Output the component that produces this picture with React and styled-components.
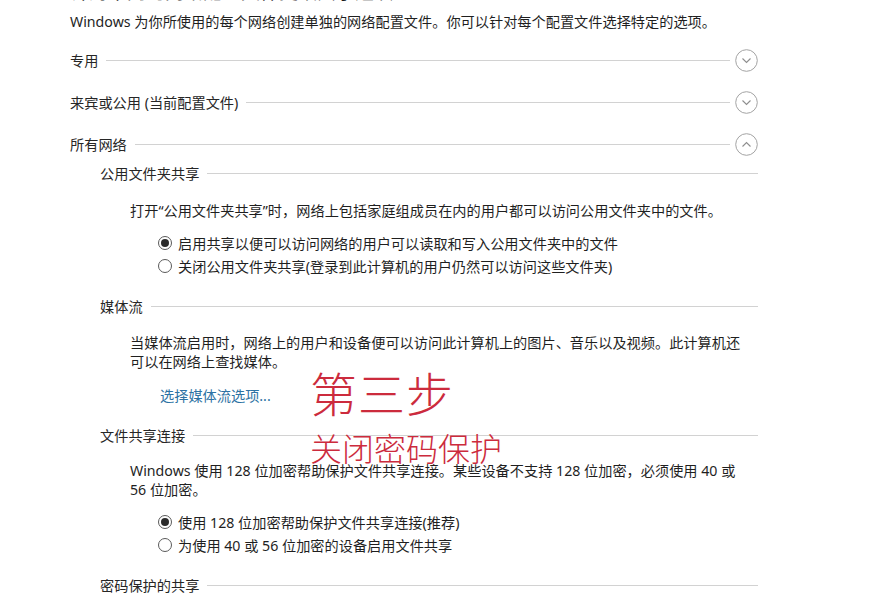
import React from 'react';
import styled, { createGlobalStyle } from 'styled-components';

const GlobalStyle = createGlobalStyle`
    html, body {
        margin: 0;
        padding: 0;
        background: #ffffff;
        overflow: hidden;
    }
    body {
        font-family: "Noto Sans", "Noto Sans CJK SC", sans-serif;
        color: #1f1f1f;
    }
`;

const Page = styled.div`
    position: relative;
    display: flex;
    flex-direction: column;
    width: 688px;
    height: 605px;
    padding-left: 70px;
    font-size: 14.2px;
`;

const Title = styled.div`
    margin-top: -20px;
    font-size: 19px;
    line-height: 24px;
    color: #1a1a1a;
    white-space: nowrap;
`;

const Intro = styled.p`
    margin: 8px 0 0;
    line-height: 20px;
    white-space: nowrap;
`;

const HeaderRow = styled.div`
    display: flex;
    align-items: center;
    height: 24px;
    margin-top: ${(p) => (p.$first ? '16px' : '18px')};
`;

const Label = styled.span`
    white-space: nowrap;
    color: #262626;
`;

const Rule = styled.div`
    flex: 1;
    height: 1px;
    background: #d2d2d2;
    margin: 0 ${(p) => (p.$end ? '0' : '5px')} 0 8px;
`;

const Toggle = styled.svg`
    width: 23px;
    height: 23px;
    flex: none;
`;

const Group = styled.div`
    padding-left: 30px;
    display: flex;
    flex-direction: column;
`;

const SubHeader = styled.div`
    display: flex;
    align-items: center;
    height: 24px;
    margin-top: ${(p) => p.$top}px;
`;

const Body = styled.div`
    padding-left: 30px;
    display: flex;
    flex-direction: column;
`;

const Para = styled.p`
    margin: ${(p) => p.$top || 15}px 0 0;
    line-height: 19px;
    white-space: nowrap;
`;

const Radios = styled.div`
    margin-top: 11px;
    padding-left: 28px;
    display: flex;
    flex-direction: column;
`;

const RadioRow = styled.label`
    display: flex;
    align-items: center;
    height: 23px;
    gap: 6px;
    white-space: nowrap;
`;

const Dot = styled.span`
    width: 12px;
    height: 12px;
    border: 1px solid #5a5a5a;
    border-radius: 50%;
    display: flex;
    align-items: center;
    justify-content: center;
    flex: none;

    &::after {
        content: "";
        width: 8px;
        height: 8px;
        border-radius: 50%;
        background: ${(p) => (p.$on ? '#2b2b2b' : 'transparent')};
    }
`;

const Link = styled.a`
    margin-top: 15px;
    padding-left: 30px;
    line-height: 19px;
    color: #2d72a3;
    text-decoration: none;
`;

const Note = styled.div`
    position: absolute;
    left: 310px;
    top: ${(p) => p.$top}px;
    font-family: "Noto Sans CJK SC", sans-serif;
    font-size: ${(p) => p.$size}px;
    line-height: 1;
    color: #cc2b3d;
    font-weight: 300;
    white-space: nowrap;
    letter-spacing: ${(p) => p.$spacing || 0}px;
`;

const Chevron = ({ up }) => (
    <Toggle viewBox="0 0 23 23">
        <circle cx="11.5" cy="11.5" r="10.8" fill="none" stroke="#a3a3a3" strokeWidth="1" />
        <path
            d={up ? 'M7.5 13.5 L11.5 9.5 L15.5 13.5' : 'M7.5 9.5 L11.5 13.5 L15.5 9.5'}
            fill="none"
            stroke="#8e8e8e"
            strokeWidth="1.1"
        />
    </Toggle>
);

const Radio = ({ on, children }) => (
    <RadioRow>
        <Dot $on={on} />
        <span>{children}</span>
    </RadioRow>
);

const App = () => (
    <>
        <GlobalStyle />
        <Page>
            <Title>针对不同的网络配置文件更改共享选项</Title>
            <Intro>Windows 为你所使用的每个网络创建单独的网络配置文件。你可以针对每个配置文件选择特定的选项。</Intro>

            <HeaderRow $first>
                <Label>专用</Label>
                <Rule />
                <Chevron />
            </HeaderRow>
            <HeaderRow>
                <Label>来宾或公用 (当前配置文件)</Label>
                <Rule />
                <Chevron />
            </HeaderRow>
            <HeaderRow>
                <Label>所有网络</Label>
                <Rule />
                <Chevron up />
            </HeaderRow>

            <Group>
                <SubHeader $top={5}>
                    <Label>公用文件夹共享</Label>
                    <Rule $end />
                </SubHeader>
                <Body>
                    <Para $top={16}>打开“公用文件夹共享”时，网络上包括家庭组成员在内的用户都可以访问公用文件夹中的文件。</Para>
                    <Radios>
                        <Radio on>启用共享以便可以访问网络的用户可以读取和写入公用文件夹中的文件</Radio>
                        <Radio>关闭公用文件夹共享(登录到此计算机的用户仍然可以访问这些文件夹)</Radio>
                    </Radios>
                </Body>

                <SubHeader $top={17}>
                    <Label>媒体流</Label>
                    <Rule $end />
                </SubHeader>
                <Body>
                    <Para>
                        当媒体流启用时，网络上的用户和设备便可以访问此计算机上的图片、音乐以及视频。此计算机还
                        <br />
                        可以在网络上查找媒体。
                    </Para>
                    <Link href="#">选择媒体流选项...</Link>
                </Body>

                <SubHeader $top={18}>
                    <Label>文件共享连接</Label>
                    <Rule $end />
                </SubHeader>
                <Body>
                    <Para $top={14}>
                        Windows 使用 128 位加密帮助保护文件共享连接。某些设备不支持 128 位加密，必须使用 40 或
                        <br />
                        56 位加密。
                    </Para>
                    <Radios>
                        <Radio on>使用 128 位加密帮助保护文件共享连接(推荐)</Radio>
                        <Radio>为使用 40 或 56 位加密的设备启用文件共享</Radio>
                    </Radios>
                </Body>

                <SubHeader $top={17}>
                    <Label>密码保护的共享</Label>
                    <Rule $end />
                </SubHeader>
            </Group>

            <Note $top={368} $size={47} $spacing={1}>第三步</Note>
            <Note $top={431} $size={32}>关闭密码保护</Note>
        </Page>
    </>
);

export default App;
